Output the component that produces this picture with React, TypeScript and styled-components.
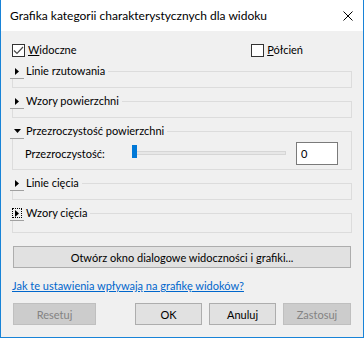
import React from "react";
import styled, { createGlobalStyle } from "styled-components";

const Global = createGlobalStyle`
  html, body { margin: 0; padding: 0; background: #ffffff; }
  body { font-family: Lato, "Noto Sans", "Liberation Sans", sans-serif; font-size: 11px; color: #000; }
  * { box-sizing: border-box; }
`;

const Window = styled.div`
  width: 364px;
  height: 338px;
  display: flex;
  flex-direction: column;
  border: 1px solid #1883d7;
  border-top: none;
  background: #f0f0f0;
`;

const TitleBar = styled.div`
  height: 31px;
  flex: none;
  background: #ffffff;
  display: flex;
  align-items: center;
  justify-content: space-between;
  padding-left: 9px;
  padding-right: 10px;
  font-size: 12px;
`;

const CloseIcon = styled.svg`
  width: 10px;
  height: 10px;
  display: block;
`;

const Body = styled.div`
  flex: 1;
  display: flex;
  flex-direction: column;
  padding: 11px 11px 0 11px;
  font-size: 11px;
`;

const CheckRow = styled.div`
  display: flex;
  justify-content: space-between;
  height: 16px;
  padding-right: 49px;
`;

const CheckLabel = styled.label`
  display: flex;
  align-items: center;
  gap: 3px;
  line-height: 16px;
`;

const Box = styled.span`
  width: 13px;
  height: 13px;
  border: 1px solid #333333;
  background: #ffffff;
  display: flex;
  align-items: center;
  justify-content: center;
`;

const Group = styled.fieldset<{ $pb: number }>`
  margin: 5px 0 0 0;
  padding: 0 0 ${(p) => p.$pb}px 0;
  border: 1px solid #dcdcdc;
  min-width: 0;
`;

const Legend = styled.legend`
  margin-left: -3px;
  padding: 0 3px 0 0;
  height: 16px;
  display: flex;
  align-items: center;
  gap: 2px;
  line-height: 16px;
`;

const Expander = styled.span`
  width: 14px;
  height: 15px;
  border-bottom: 1px solid #a0a0a0;
  display: flex;
  align-items: center;
  justify-content: center;
  margin-top: 1px;
`;

const FocusRing = styled.span`
  width: 10px;
  height: 10px;
  border: 1px dotted #000;
  display: flex;
  align-items: center;
  justify-content: center;
`;

const Row = styled.div`
  display: flex;
  align-items: center;
  height: 24px;
  margin-top: 2px;
  padding-left: 12px;
`;

const RowLabel = styled.span`
  width: 107px;
  flex: none;
`;

const Track = styled.div`
  position: relative;
  flex: none;
  width: 154px;
  height: 4px;
  background: #e7e7e7;
  border: 1px solid #d6d6d6;
`;

const Thumb = styled.div`
  position: absolute;
  left: -1px;
  top: -7px;
  width: 5px;
  height: 13px;
  background: #0078d7;
`;

const Edit = styled.div`
  margin-left: 10px;
  width: 42px;
  height: 23px;
  background: #ffffff;
  border: 1px solid #7a7a7a;
  padding-left: 4px;
  display: flex;
  align-items: center;
`;

const WideButton = styled.button`
  margin: 13px 1px 0 1px;
  height: 22px;
  font: inherit;
  background: #e1e1e1;
  border: 1px solid #adadad;
  color: #000;
  padding: 0;
`;

const Link = styled.a`
  margin-top: 10px;
  color: #0066cc;
  text-decoration: underline;
  line-height: 16px;
`;

const ButtonRow = styled.div`
  margin-top: 9px;
  display: flex;
  padding: 0 1px;
`;

const Spacer = styled.div`
  flex: 1;
`;

const ButtonGroup = styled.div`
  display: flex;
  gap: 7px;
`;

const DlgButton = styled.button<{ $w: number; $disabled?: boolean }>`
  width: ${(p) => p.$w}px;
  height: 22px;
  font: inherit;
  padding: 0;
  background: ${(p) => (p.$disabled ? "#cccccc" : "#e1e1e1")};
  border: 1px solid ${(p) => (p.$disabled ? "#bfbfbf" : "#adadad")};
  color: ${(p) => (p.$disabled ? "#838383" : "#000000")};
`;

const Right = () => (
  <svg width="4" height="7" viewBox="0 0 4 7">
    <path d="M0 0 L4 3.5 L0 7 Z" fill="#000" />
  </svg>
);

const Down = () => (
  <svg width="7" height="4" viewBox="0 0 7 4">
    <path d="M0 0 L7 0 L3.5 4 Z" fill="#000" />
  </svg>
);

function Section(props: { title: string; open?: boolean; focus?: boolean; pb: number; children?: React.ReactNode }) {
  const icon = props.open ? <Down /> : <Right />;
  return (
    <Group $pb={props.pb}>
      <Legend>
        <Expander>{props.focus ? <FocusRing>{icon}</FocusRing> : icon}</Expander>
        <span>{props.title}</span>
      </Legend>
      {props.children}
    </Group>
  );
}

export default function App() {
  return (
    <>
      <Global />
      <Window>
        <TitleBar>
          <span>Grafika kategorii charakterystycznych dla widoku</span>
          <CloseIcon viewBox="0 0 10 10">
            <path d="M0.5 0.5 L9.5 9.5 M9.5 0.5 L0.5 9.5" stroke="#000" strokeWidth="1" fill="none" />
          </CloseIcon>
        </TitleBar>
        <Body>
          <CheckRow>
            <CheckLabel>
              <Box>
                <svg width="11" height="9" viewBox="0 0 11 9">
                  <path d="M1 4.5 L4 7.5 L10 1" stroke="#4a4a4a" strokeWidth="1.2" fill="none" />
                </svg>
              </Box>
              <span><u>W</u>idoczne</span>
            </CheckLabel>
            <CheckLabel>
              <Box />
              <span><u>P</u>ółcień</span>
            </CheckLabel>
          </CheckRow>
          <Section title="Linie rzutowania" pb={8} />
          <Section title="Wzory powierzchni" pb={8} />
          <Section title="Przezroczystość powierzchni" open pb={4}>
            <Row>
              <RowLabel>Przezroczystość:</RowLabel>
              <Track>
                <Thumb />
              </Track>
              <Edit>0</Edit>
            </Row>
          </Section>
          <Section title="Linie cięcia" pb={8} />
          <Section title="Wzory cięcia" focus pb={11} />
          <WideButton>Otwórz okno dialogowe widoczności i grafiki...</WideButton>
          <Link href="#">Jak te ustawienia wpływają na grafikę widoków?</Link>
          <ButtonRow>
            <DlgButton $w={83} $disabled>Resetuj</DlgButton>
            <Spacer />
            <ButtonGroup>
              <DlgButton $w={67}>OK</DlgButton>
              <DlgButton $w={67}>Anuluj</DlgButton>
              <DlgButton $w={68} $disabled>Zastosuj</DlgButton>
            </ButtonGroup>
          </ButtonRow>
        </Body>
      </Window>
    </>
  );
}
